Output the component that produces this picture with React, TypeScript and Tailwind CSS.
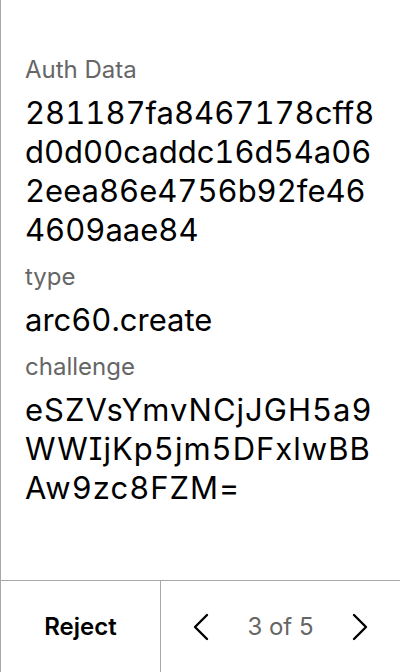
const fields = [
  { label: 'Auth Data', value: '281187fa8467178cff8d0d00caddc16d54a062eea86e4756b92fe464609aae84', wide: false },
  { label: 'type', value: 'arc60.create', wide: false },
  { label: 'challenge', value: 'eSZVsYmvNCjJGH5a9WWIjKp5jm5DFxlwBBAw9zc8FZM=', wide: true },
];

function Chevron({ dir }: { dir: 'left' | 'right' }) {
  return (
    <svg width="16" height="28" viewBox="0 0 16 28" fill="none" stroke="#000" strokeWidth="2.4" strokeLinecap="round" strokeLinejoin="round">
      {dir === 'left' ? <polyline points="14,2 2,14 14,26" /> : <polyline points="2,2 14,14 2,26" />}
    </svg>
  );
}

export default function App() {
  return (
    <div
      className="w-[400px] h-[672px] flex flex-col bg-white border-l border-[#a8a8a8] text-black [font-feature-settings:'cv08']"
      style={{ fontFamily: 'Inter, "Noto Sans", sans-serif' }}
    >
      <div className="flex-1 flex flex-col gap-3 pt-[54px] pl-6 pr-6">
        {fields.map((f) => (
          <div key={f.label} className="flex flex-col gap-[7px]">
            <div className="text-[24px] leading-[32px] text-[#666]">{f.label}</div>
            <div
              className={
                f.wide
                  ? 'text-[31px] leading-[39px] tabular-nums tracking-[1px] break-all'
                  : 'text-[31px] leading-[39px] tabular-nums break-all'
              }
            >
              {f.value}
            </div>
          </div>
        ))}
      </div>
      <div className="h-[92px] flex border-t border-[#a8a8a8]">
        <button className="w-[160px] flex items-center justify-center text-[24px] font-semibold border-r border-[#a8a8a8]">
          Reject
        </button>
        <div className="flex-1 flex items-center justify-between px-8">
          <Chevron dir="left" />
          <span className="text-[24px] text-[#666]">3 of 5</span>
          <Chevron dir="right" />
        </div>
      </div>
    </div>
  );
}
